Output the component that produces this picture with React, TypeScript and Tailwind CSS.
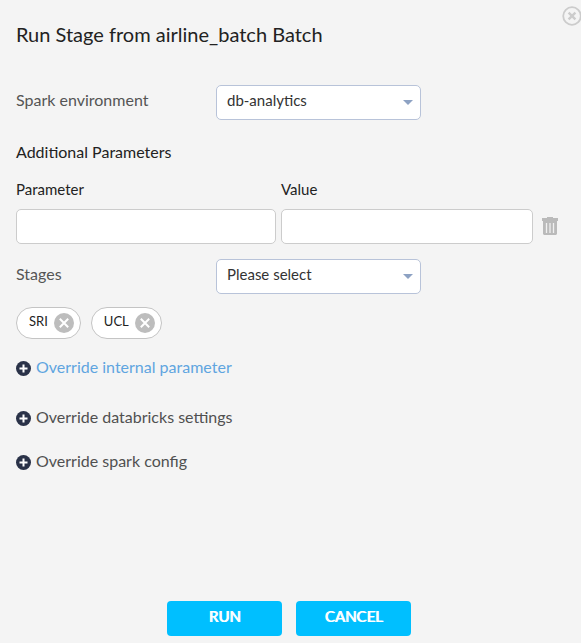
import { useState } from "react";

function Caret() {
  return (
    <svg className="pointer-events-none absolute top-[15px] right-2 h-[5px] w-[10px]" viewBox="0 0 10 5" fill="#8da2c3" aria-hidden="true">
      <path d="M0 0h10L5 5z" />
    </svg>
  );
}

function SelectRow({ id, label, options }: { id: string; label: string; options: string[] }) {
  return (
    <div className="flex items-center">
      <label htmlFor={id} className="w-[200px] shrink-0 pb-[6px] text-base leading-6 text-[#555]">
        {label}
      </label>
      <div className="relative w-[205px]">
        <select
          id={id}
          className="block h-[35px] w-full appearance-none rounded-[5px] border border-[#b8c3d9] bg-white pr-6 pb-1 pl-[10px] text-[15px] text-[#333] outline-none"
        >
          {options.map((option) => (
            <option key={option}>{option}</option>
          ))}
        </select>
        <Caret />
      </div>
    </div>
  );
}

function Chip({ name, onRemove }: { name: string; onRemove: () => void }) {
  return (
    <li className="flex h-8 items-center gap-[6px] rounded-full border border-[#c4c4c4] bg-white pr-[6px] pl-3">
      <span className="pb-1 text-[13px] leading-5 text-[#222]">{name}</span>
      <button type="button" aria-label={`Remove ${name}`} onClick={onRemove}>
        <svg className="block h-5 w-5" viewBox="0 0 20 20" aria-hidden="true">
          <circle cx="10" cy="10" r="10" fill="#bdbdbd" />
          <path d="M5.8 5.8l8.4 8.4M14.2 5.8l-8.4 8.4" stroke="#fff" strokeWidth="2" />
        </svg>
      </button>
    </li>
  );
}

function OverrideToggle({ label, active = false }: { label: string; active?: boolean }) {
  return (
    <button type="button" className="flex items-center gap-[5px] text-left">
      <svg className="mt-[2px] h-[15px] w-[15px] shrink-0" viewBox="0 0 15 15" aria-hidden="true">
        <circle cx="7.5" cy="7.5" r="7.5" fill="#2a3248" />
        <path d="M7.5 3.5v8M3.5 7.5h8" stroke="#fff" strokeWidth="2" />
      </svg>
      <span className={active ? "text-base leading-6 text-[#5fa5e0]" : "text-base leading-6 text-[#505050]"}>{label}</span>
    </button>
  );
}

export default function App() {
  const [stages, setStages] = useState(["SRI", "UCL"]);
  const inputClass = "block h-[35px] w-full min-w-0 rounded-[5px] border border-[#ccc] bg-white px-[10px] text-[15px] outline-none";
  const actionClass = "h-[35px] w-[115px] rounded-[4px] bg-[#00bfff] pb-1 text-[15px] text-white [text-shadow:1px_0_#fff]";

  return (
    <main className="relative flex min-h-screen flex-col bg-[#f4f4f4] px-4 pt-[22px] pb-[7px] font-['Lato',sans-serif] text-[#222]">
      <button type="button" aria-label="Close" className="absolute top-[6px] right-[-1px]">
        <svg className="block h-5 w-5" viewBox="0 0 20 20" fill="none" stroke="#ccc" aria-hidden="true">
          <circle cx="10" cy="10" r="8.8" strokeWidth="1.8" />
          <path d="M6.6 6.6l6.8 6.8M13.4 6.6l-6.8 6.8" strokeWidth="2.4" />
        </svg>
      </button>
      <h1 className="text-xl leading-6">Run Stage from airline_batch Batch</h1>
      <form className="flex grow flex-col" onSubmit={(event) => event.preventDefault()}>
        <div className="mt-[39px]">
          <SelectRow id="environment" label="Spark environment" options={["db-analytics"]} />
        </div>
        <h2 className="mt-5 text-base leading-6">Additional Parameters</h2>
        <div className="mt-[13px] flex items-end">
          <div className="grid grow grid-cols-[260fr_252fr] gap-x-[5px] text-[15px] leading-6">
            <div>
              <label htmlFor="parameter" className="mb-2 block">Parameter</label>
              <input id="parameter" type="text" className={inputClass} />
            </div>
            <div>
              <label htmlFor="value" className="mb-2 block">Value</label>
              <input id="value" type="text" className={inputClass} />
            </div>
          </div>
          <button type="button" aria-label="Delete parameter" className="mr-[7px] mb-[9px] ml-[9px]">
            <svg className="block h-[18px] w-4" viewBox="0 0 16 18" aria-hidden="true">
              <path d="M5 0h6v1h5v3H0V1h5z" fill="#bababa" />
              <path d="M1 4h14v13l-1 1H2l-1-1z" fill="#bababa" />
              <path d="M4.5 6v10M8 6v10M11.5 6v10" stroke="#f0f0f0" strokeWidth="1.3" />
            </svg>
          </button>
        </div>
        <div className="mt-[15px]">
          <SelectRow id="stages" label="Stages" options={["Please select"]} />
        </div>
        <ul className="mt-[13px] flex flex-wrap gap-[10px]">
          {stages.map((stage) => (
            <Chip key={stage} name={stage} onRemove={() => setStages(stages.filter((s) => s !== stage))} />
          ))}
        </ul>
        <div className="mt-4 flex flex-col items-start">
          <OverrideToggle label="Override internal parameter" active />
          <div className="mt-[26px] flex flex-col items-start gap-5">
            <OverrideToggle label="Override databricks settings" />
            <OverrideToggle label="Override spark config" />
          </div>
        </div>
        <div className="mt-auto flex justify-center gap-[14px] pt-8 pr-[3px]">
          <button type="submit" className={actionClass}>RUN</button>
          <button type="button" className={actionClass}>CANCEL</button>
        </div>
      </form>
    </main>
  );
}
